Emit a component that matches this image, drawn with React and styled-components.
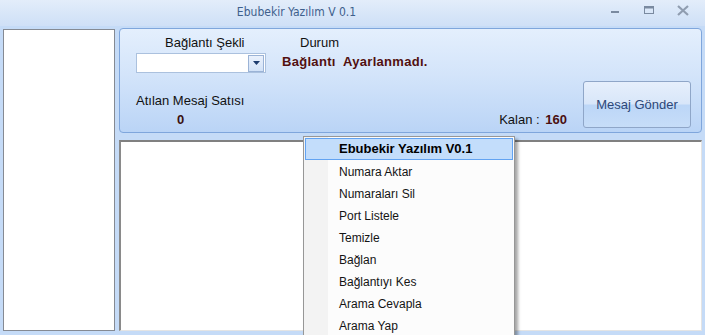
import React from 'react';
import styled, { createGlobalStyle } from 'styled-components';

const GlobalStyle = createGlobalStyle`
  html, body {
    margin: 0;
    padding: 0;
    overflow: hidden;
  }
  body {
    font-family: "Liberation Sans", Arial, sans-serif;
    font-size: 13px;
    background: #c5dbf7;
  }
`;

const menuItems = [
  'Numara Aktar',
  'Numaraları Sil',
  'Port Listele',
  'Temizle',
  'Bağlan',
  'Bağlantıyı Kes',
  'Arama Cevapla',
  'Arama Yap',
];

function App() {
  return (
    <Window>
      <GlobalStyle />
      <TitleBar>
        <Title>Ebubekir Yazılım V 0.1</Title>
        <Controls>
          <CtrlButton aria-label="minimize">
            <svg width="10" height="10" viewBox="0 0 10 10">
              <rect x="1" y="6" width="8" height="2" fill="#7a8aa0" />
            </svg>
          </CtrlButton>
          <CtrlButton aria-label="maximize">
            <svg width="10" height="10" viewBox="0 0 10 10">
              <rect x="0.5" y="1.5" width="9" height="7" fill="none" stroke="#7a8aa0" />
              <rect x="0.5" y="1.5" width="9" height="2" fill="#7a8aa0" />
            </svg>
          </CtrlButton>
          <CtrlButton aria-label="close">
            <svg width="12" height="11" viewBox="0 0 12 11">
              <path d="M1 1 L11 10 M11 1 L1 10" stroke="#909db0" strokeWidth="2.2" />
            </svg>
          </CtrlButton>
        </Controls>
      </TitleBar>

      <Body>
        <ListBox />
        <RightColumn>
          <TopPanel>
            <TopRow>
              <ConnectionGroup>
                <FieldLabel>Bağlantı Şekli</FieldLabel>
                <Combo>
                  <ComboArrow>
                    <svg width="7" height="4" viewBox="0 0 7 4">
                      <path d="M0 0 H7 L3.5 4 Z" fill="#1d3c6e" />
                    </svg>
                  </ComboArrow>
                </Combo>
              </ConnectionGroup>
              <StatusGroup>
                <StatusTitle>Durum</StatusTitle>
                <StatusText>Bağlantı&nbsp; Ayarlanmadı.</StatusText>
              </StatusGroup>
            </TopRow>
            <BottomRow>
              <CountGroup>
                <CountLabel>Atılan Mesaj Satısı</CountLabel>
                <CountValue>0</CountValue>
              </CountGroup>
              <Remaining>
                Kalan : <b>160</b>
              </Remaining>
              <SendButton>Mesaj Gönder</SendButton>
            </BottomRow>
          </TopPanel>
          <TextArea />
        </RightColumn>
      </Body>

      <ContextMenu>
        <MenuHeader>Ebubekir Yazılım V0.1</MenuHeader>
        {menuItems.map((item) => (
          <MenuItem key={item}>{item}</MenuItem>
        ))}
      </ContextMenu>
    </Window>
  );
}

export default App;

const Window = styled.div`
  position: relative;
  width: 705px;
  height: 335px;
  display: flex;
  flex-direction: column;
  background: #c5dbf7;
  overflow: hidden;
`;

const TitleBar = styled.div`
  height: 26px;
  flex-shrink: 0;
  position: relative;
  display: flex;
  align-items: center;
  justify-content: center;
  background: linear-gradient(#e3edfa, #d6e5f8 60%, #cfe0f7);
`;

const Title = styled.div`
  font-family: "Liberation Sans Narrow", "DejaVu Sans Condensed", sans-serif;
  font-size: 12px;
  color: #3e5f8c;
  margin-right: 112px;
  margin-top: -2px;
`;

const Controls = styled.div`
  position: absolute;
  right: 12px;
  top: 2px;
  display: flex;
  gap: 14px;
`;

const CtrlButton = styled.div`
  width: 20px;
  height: 16px;
  display: flex;
  align-items: center;
  justify-content: center;
`;

const Body = styled.div`
  flex: 1;
  display: flex;
  gap: 4px;
  padding: 2px 3px 4px 3px;
  min-height: 0;
`;

const ListBox = styled.div`
  width: 110px;
  margin-top: 1px;
  background: #fff;
  border: 1px solid #858a93;
`;

const RightColumn = styled.div`
  flex: 1;
  display: flex;
  flex-direction: column;
  gap: 7px;
`;

const TopPanel = styled.div`
  height: 105px;
  box-sizing: border-box;
  border: 1px solid #7fa6dc;
  border-radius: 4px;
  background: linear-gradient(#e4effd, #d3e4fa 45%, #bad4f6);
  padding: 7px 10px 4px 16px;
  display: flex;
  flex-direction: column;
  justify-content: space-between;
`;

const TopRow = styled.div`
  display: flex;
  gap: 16px;
`;

const ConnectionGroup = styled.div`
  width: 130px;
  display: flex;
  flex-direction: column;
  gap: 3px;
`;

const FieldLabel = styled.div`
  line-height: 14px;
  color: #111;
  padding-left: 29px;
`;

const Combo = styled.div`
  height: 20px;
  box-sizing: border-box;
  background: #fff;
  border: 1px solid #abc1de;
  display: flex;
  justify-content: flex-end;
  align-items: center;
  padding-right: 1px;
`;

const ComboArrow = styled.div`
  width: 14px;
  height: 15px;
  border: 1px solid #9bb3d6;
  background: linear-gradient(#eaf1fc, #d2e2f7);
  display: flex;
  align-items: center;
  justify-content: center;
`;

const StatusGroup = styled.div`
  display: flex;
  flex-direction: column;
  gap: 5px;
`;

const StatusTitle = styled.div`
  line-height: 14px;
  color: #111;
  padding-left: 18px;
`;

const StatusText = styled.div`
  font-weight: bold;
  line-height: 14px;
  letter-spacing: 0.3px;
  color: #52100f;
`;

const BottomRow = styled.div`
  display: flex;
  align-items: flex-end;
`;

const CountGroup = styled.div`
  flex: 1;
  display: flex;
  flex-direction: column;
  gap: 5px;
  margin-bottom: 1px;
`;

const CountLabel = styled.div`
  line-height: 14px;
  color: #111;
`;

const CountValue = styled.div`
  font-weight: bold;
  line-height: 14px;
  color: #3a1010;
  padding-left: 41px;
`;

const Remaining = styled.div`
  line-height: 14px;
  color: #111;
  margin: 0 16px 1px 0;
  b {
    color: #4a1010;
    margin-left: 2px;
  }
`;

const SendButton = styled.div`
  width: 108px;
  height: 47px;
  box-sizing: border-box;
  border: 1px solid #8fa6c8;
  border-radius: 3px;
  background: linear-gradient(#e6effc, #d8e6f9 49%, #bcd6f7 51%, #c7ddf8);
  display: flex;
  align-items: center;
  justify-content: center;
  color: #2d4778;
`;

const TextArea = styled.div`
  flex: 1;
  background: #fff;
  border-top: 2px solid #808080;
  border-left: 2px solid #8a8a8a;
  border-right: 1px solid #e4e4e4;
  border-bottom: 1px solid #e4e4e4;
`;

const ContextMenu = styled.div`
  position: absolute;
  left: 303px;
  top: 136px;
  width: 208px;
  height: 210px;
  padding: 1px;
  border: 1px solid #979797;
  background: linear-gradient(to right, #f3f3f3 24px, #fcfcfc 24px);
  box-shadow: 3px 3px 3px rgba(0, 0, 0, 0.35);
  display: flex;
  flex-direction: column;
  z-index: 10;
`;

const MenuItem = styled.div`
  height: 22px;
  line-height: 22px;
  padding-left: 34px;
  font-size: 12px;
  color: #141414;
  white-space: nowrap;
`;

const MenuHeader = styled(MenuItem)`
  height: 20px;
  line-height: 20px;
  margin-bottom: 1px;
  padding-left: 33px;
  font-weight: bold;
  font-size: 13px;
  border: 1px solid #62a3f2;
  background: #c3ddfb;
  color: #000;
`;
